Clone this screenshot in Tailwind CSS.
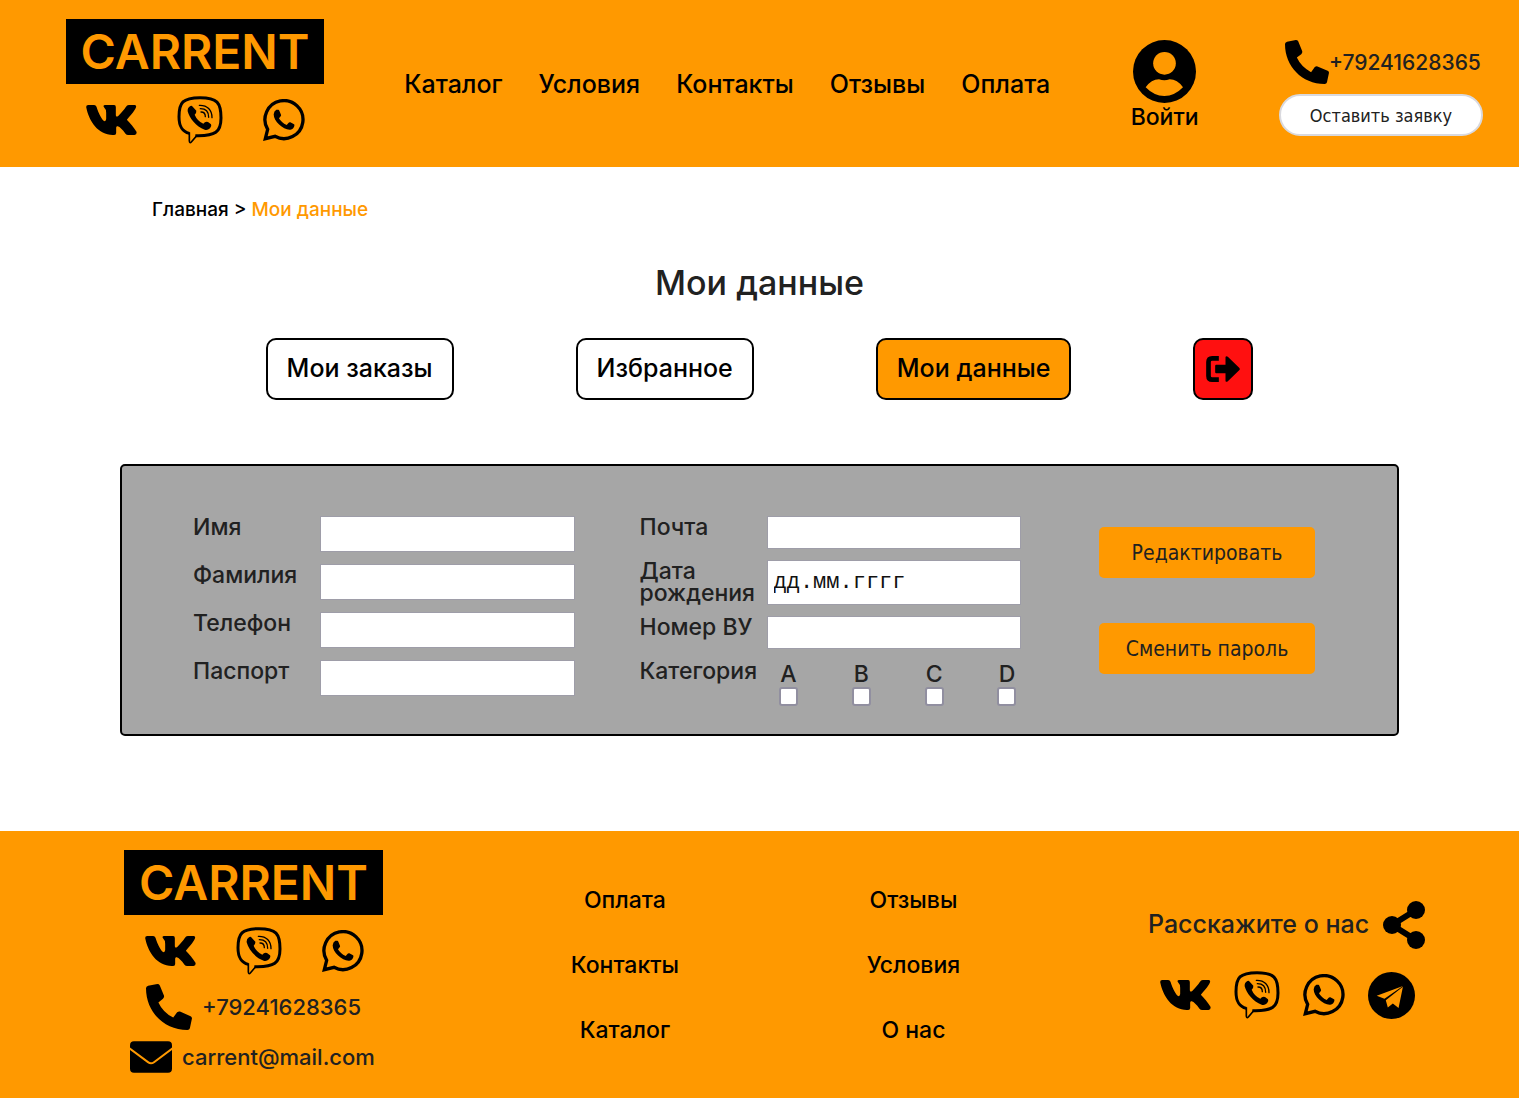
<!DOCTYPE html>
<html lang="ru">
<head>
<meta charset="utf-8">
<meta name="viewport" content="width=device-width, initial-scale=1">
<title>CARRENT — Мои данные</title>
<script src="https://cdn.jsdelivr.net/npm/@tailwindcss/browser@4"></script>
</head>
<body class="flex min-h-screen flex-col bg-white font-['Inter',sans-serif] font-medium text-black">
<svg class="hidden" aria-hidden="true">
  <symbol id="vk" viewBox="0 0 152 90"><path d="M6 0H24Q29 0 31 5C38 27 48 45 54 48Q59 50 60 42V24Q60 12 53 6Q50 0 57 0H84Q89 0 89 6V30Q89 38 97 32C107 22 114 14 119 6Q122 0 128 0H146Q152 1 149 8C144 20 130 34 122 44C132 54 144 68 151 80Q153 90 145 90H126Q121 90 118 86C109 74 101 66 95 64Q90 62 90 68V84Q90 90 84 90H80C36 90 8 48 0 6Q0 0 6 0Z"/></symbol>
  <symbol id="viber" viewBox="0 0 136 144">
    <path d="M54 119C115 121 131 108 131 66C131 20 120 5 68 5C16 5 5 20 5 62C5 92 14 106 36 112" fill="none" stroke="currentColor" stroke-width="9"/>
    <path d="M36 109V135Q37 143 42 138L58 119" fill="none" stroke="currentColor" stroke-width="5"/>
    <path d="M44 30L57 44Q58 50 52 56Q60 75 78 83Q84 75 92 78L101 85Q104 90 98 97Q90 104 82 101C56 92 36 66 31 46Q30 36 38 31Q41 28 44 30Z"/>
    <path d="M66 28C90 27 104 42 104 65M69 38C85 38 94 48 94 64M71 48C80 48 84 53 84 62" fill="none" stroke="currentColor" stroke-width="4" stroke-linecap="round"/>
  </symbol>
  <symbol id="whatsapp" viewBox="0 0 126 126">
    <path d="M7 119L14 91A57 57 0 1 1 36 112Z" fill="none" stroke="currentColor" stroke-width="10"/>
    <path d="M40 32H46Q48 32 49 35L54 47Q55 49 53 52L48 58Q55 71 71 78L77 71Q79 69 82 70L93 76Q95 77 94 81Q92 90 82 92C62 94 32 68 32 46Q33 36 40 32Z"/>
  </symbol>
  <symbol id="phone" viewBox="0 0 130 130"><path d="M6 5L32 0Q37 0 39 4L51 33Q52 38 48 42L35 52Q48 80 77 95L88 80Q92 77 96 78L126 91Q130 93 130 97L124 125Q123 130 117 130C50 130 0 78 0 12Q0 7 6 5Z"/></symbol>
</svg>

<header class="bg-[#ff9900]">
  <div class="flex items-start justify-between pt-[19px] pr-9 pb-[23px] pl-[66px]">
    <div class="w-[258px]">
      <a href="#" class="flex h-[65px] items-center justify-center bg-black text-[48px] font-semibold text-[#ff9900]">CARRENT</a>
      <div class="mt-3 flex h-12 items-center justify-between pr-[19px] pl-5">
        <a href="#" aria-label="VK"><svg class="h-[30px] w-[51px]"><use href="#vk"/></svg></a>
        <a href="#" aria-label="Viber"><svg class="h-12 w-[46px]"><use href="#viber"/></svg></a>
        <a href="#" aria-label="WhatsApp"><svg class="size-[42px]"><use href="#whatsapp"/></svg></a>
      </div>
    </div>
    <nav class="mt-[49px] flex gap-9 text-[25px] leading-8">
      <a href="#">Каталог</a><a href="#">Условия</a><a href="#">Контакты</a><a href="#">Отзывы</a><a href="#">Оплата</a>
    </nav>
    <a href="#" class="mt-[21px] flex flex-col items-center text-[23px] leading-7">
      <svg class="size-[63px]" viewBox="0 0 189 189"><circle cx="94.5" cy="94.5" r="94.5"/><g fill="#ff9900"><circle cx="94.5" cy="70" r="34"/><path d="M38 142Q55 118 78 118Q94 124 110 118Q133 118 150 142Q125 168 94 168Q63 168 38 142Z"/></g></svg>
      Войти
    </a>
    <div class="mt-[21px] w-[204px] text-[#212121]">
      <a href="tel:+79241628365" class="ml-1.5 flex items-center text-[21px] leading-none"><svg class="size-[44px] shrink-0" fill="#000"><use href="#phone"/></svg>+79241628365</a>
      <button type="button" class="mt-2.5 h-[42px] w-full rounded-full border-2 border-[#d9d9de] bg-white font-['DejaVu_Sans_Condensed','DejaVu_Sans',sans-serif] text-[18px] font-normal">Оставить заявку</button>
    </div>
  </div>
</header>

<main class="flex-1 pb-[94px]">
  <div class="mt-[30px] ml-[152px] text-[19px] leading-[26px]"><a href="#">Главная</a> &gt; <span class="text-[#ff9900]">Мои данные</span></div>
  <h1 class="mt-10 text-center text-[34px] leading-10 text-[#212121]">Мои данные</h1>
  <div class="mt-[35px] flex items-center justify-center gap-[122px] text-[25px]">
    <a href="#" class="flex h-[62px] items-center rounded-[10px] border-2 border-black px-[19px]">Мои заказы</a>
    <a href="#" class="flex h-[62px] items-center rounded-[10px] border-2 border-black px-[19px]">Избранное</a>
    <a href="#" class="flex h-[62px] items-center rounded-[10px] border-2 border-black bg-[#ff9900] px-[19px]">Мои данные</a>
    <button type="button" aria-label="Выйти" class="flex h-[62px] w-[60px] items-center justify-center rounded-[10px] border-2 border-black bg-[#ff1010]">
      <svg class="h-[26px] w-[34px]" viewBox="0 0 101 78"><path d="M38 7H18Q7 7 7 18V60Q7 71 18 71H38" fill="none" stroke="#000" stroke-width="14"/><path d="M30 26H58V4Q59 -2 65 2L99 35Q103 39 99 43L65 76Q59 80 58 74V52H30Q27 52 27 48V30Q27 26 30 26Z"/></svg>
    </button>
  </div>

  <form class="mx-[120px] mt-16 grid grid-cols-[1fr_1fr_229px] gap-[65px] rounded-[5px] border-2 border-black bg-[#a6a6a6] pt-[50px] pr-[82px] pb-7 pl-[71px] text-[23px] leading-[22px] text-[#212121]">
    <div class="grid grid-cols-[127px_1fr] content-start gap-y-3">
      <label for="name">Имя</label><input id="name" type="text" class="h-9 w-full border border-[#9e9da8] bg-white px-1.5">
      <label for="surname">Фамилия</label><input id="surname" type="text" class="h-9 w-full border border-[#9e9da8] bg-white px-1.5">
      <label for="tel">Телефон</label><input id="tel" type="tel" class="h-9 w-full border border-[#9e9da8] bg-white px-1.5">
      <label for="passport">Паспорт</label><input id="passport" type="text" class="h-9 w-full border border-[#9e9da8] bg-white px-1.5">
    </div>
    <div class="grid grid-cols-[127px_1fr] content-start gap-y-[11px]">
      <label for="mail">Почта</label><input id="mail" type="email" class="h-[33px] w-full border border-[#9e9da8] bg-white px-1.5">
      <label for="birth">Дата рождения</label><input id="birth" type="text" placeholder="дд.мм.гггг" class="h-[45px] w-full border border-[#9e9da8] bg-white px-1.5 font-['Liberation_Mono',monospace] text-[22px] font-normal placeholder:text-[#111111]">
      <label for="licence">Номер ВУ</label><input id="licence" type="text" class="h-[33px] w-full border border-[#9e9da8] bg-white px-1.5">
      <span>Категория</span>
      <div class="flex justify-between pt-[3px] pr-1 pl-3">
        <label class="flex w-5 flex-col items-center gap-0.5">A<input type="checkbox" class="size-[19px] appearance-none rounded-[3px] border-2 border-[#918fa0] bg-white"></label>
        <label class="flex w-5 flex-col items-center gap-0.5">B<input type="checkbox" class="size-[19px] appearance-none rounded-[3px] border-2 border-[#918fa0] bg-white"></label>
        <label class="flex w-5 flex-col items-center gap-0.5">C<input type="checkbox" class="size-[19px] appearance-none rounded-[3px] border-2 border-[#918fa0] bg-white"></label>
        <label class="flex w-5 flex-col items-center gap-0.5">D<input type="checkbox" class="size-[19px] appearance-none rounded-[3px] border-2 border-[#918fa0] bg-white"></label>
      </div>
    </div>
    <div class="flex flex-col gap-[45px] pt-[11px] pl-[13px] font-['DejaVu_Sans_Condensed','DejaVu_Sans',sans-serif] text-[21px] font-normal">
      <button type="button" class="h-[51px] rounded-[5px] bg-[#ff9900]">Редактировать</button>
      <button type="button" class="h-[51px] rounded-[5px] bg-[#ff9900]">Сменить пароль</button>
    </div>
  </form>
</main>

<footer class="bg-[#ff9900]">
  <div class="flex items-start justify-between pt-[19px] pr-[94px] pb-[25px] pl-[124px]">
    <div class="w-[259px] text-[#212121]">
      <a href="#" class="flex h-[65px] items-center justify-center bg-black text-[48px] font-semibold text-[#ff9900]">CARRENT</a>
      <div class="mt-3 flex h-12 items-center justify-between pr-[19px] pl-[21px] text-black">
        <a href="#" aria-label="VK"><svg class="h-[30px] w-[51px]" fill="#000"><use href="#vk"/></svg></a>
        <a href="#" aria-label="Viber"><svg class="h-12 w-[46px]"><use href="#viber"/></svg></a>
        <a href="#" aria-label="WhatsApp"><svg class="size-[42px]"><use href="#whatsapp"/></svg></a>
      </div>
      <a href="tel:+79241628365" class="mt-[9px] ml-[22px] flex items-center gap-2.5 text-[22px] leading-none"><svg class="size-[46px] shrink-0" fill="#000"><use href="#phone"/></svg>+79241628365</a>
      <a href="mailto:carrent@mail.com" class="mt-[11px] ml-1.5 flex items-center gap-2.5 text-[22px] leading-8"><svg class="h-8 w-[42px] shrink-0" viewBox="0 0 126 95" fill="#000"><rect width="126" height="95" rx="12"/><path d="M-2 21L54 63Q63 70 72 63L128 21" fill="none" stroke="#ff9900" stroke-width="6"/></svg>carrent@mail.com</a>
    </div>
    <nav class="mt-[34px] flex flex-col items-center gap-[33px] text-[23px] leading-8">
      <a href="#">Оплата</a><a href="#">Контакты</a><a href="#">Каталог</a>
    </nav>
    <nav class="mt-[34px] flex flex-col items-center gap-[33px] text-[23px] leading-8">
      <a href="#">Отзывы</a><a href="#">Условия</a><a href="#">О нас</a>
    </nav>
    <div class="mt-[51px] w-[277px]">
      <div class="flex items-center justify-between text-[25px] text-[#212121]">Расскажите о нас
        <svg class="h-12 w-[42px]" viewBox="0 0 126 144" fill="#000"><circle cx="27" cy="72" r="27"/><circle cx="99" cy="27" r="27"/><circle cx="99" cy="117" r="27"/><path d="M99 27L27 72L99 117" fill="none" stroke="#000" stroke-width="18"/></svg>
      </div>
      <div class="mt-[22px] flex h-12 items-center justify-between pr-2.5 pl-3">
        <a href="#" aria-label="VK"><svg class="h-[30px] w-[51px]"><use href="#vk"/></svg></a>
        <a href="#" aria-label="Viber"><svg class="h-12 w-[46px]"><use href="#viber"/></svg></a>
        <a href="#" aria-label="WhatsApp"><svg class="size-[42px]"><use href="#whatsapp"/></svg></a>
        <a href="#" aria-label="Telegram"><svg class="size-[47px]" viewBox="0 0 140 140"><circle cx="70" cy="70" r="70"/><path d="M26 71L104 42L49 80ZM53 84L104 44L91 107L74 94L59 106Z" fill="#ff9900"/></svg></a>
      </div>
    </div>
  </div>
</footer>
</body>
</html>
